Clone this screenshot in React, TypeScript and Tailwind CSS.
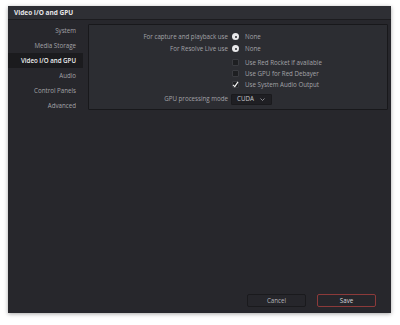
const sections = ['System', 'Media Storage', 'Video I/O and GPU', 'Audio', 'Control Panels', 'Advanced']

const Radio = () => (
  <span className="flex h-[7px] w-[7px] items-center justify-center rounded-full bg-[#e8e8ea]">
    <span className="h-[2px] w-[2px] rounded-full bg-[#2a2a2e]" />
  </span>
)

const Check = ({ checked }: { checked?: boolean }) => (
  <span className="flex h-[7px] w-[7px] items-center justify-center rounded-[1px] border border-[#3a3b40] bg-[#1e1f22]">
    {checked && (
      <svg width="7" height="7" viewBox="0 0 7 7" className="overflow-visible">
        <path d="M1 3.8 L2.8 5.6 L6 0.8" stroke="#f2f2f2" strokeWidth="1.2" fill="none" />
      </svg>
    )}
  </span>
)

const Row = ({ label, children, className }: { label?: string; children: React.ReactNode; className?: string }) => (
  <div className={'flex items-center ' + (className ?? '')}>
    <div className="w-[139px] text-right">{label}</div>
    <div className="ml-[4px] flex items-center">{children}</div>
  </div>
)

export default function App() {
  return (
    <div
      className="h-[325px] w-[400px] bg-white pl-[8px] pt-[6px] text-[6.2px] text-[#a3a3a8]"
      style={{ fontFamily: '"Open Sans", "Liberation Sans", sans-serif' }}>
      <div className="flex h-[307px] w-[383px] flex-col bg-[#27272c] shadow-[0_1px_4px_rgba(0,0,0,0.35)]">
        <div className="flex h-[14px] items-center border-b border-[#1c1c1f] bg-[#2e2f34] pl-[6px] text-[6.5px] font-bold text-[#e6e6e8]">
          Video I/O and GPU
        </div>
        <div className="flex flex-1 pt-[3px]">
          <div className="w-[75px]">
            {sections.map((s) => (
              <div
                key={s}
                className={
                  s === 'Video I/O and GPU'
                    ? 'flex h-[15px] items-center justify-end bg-[#1b1b1e] pr-[7px] font-semibold text-[#f0f0f2]'
                    : 'flex h-[15px] items-center justify-end pr-[7px]'
                }>
                {s}
              </div>
            ))}
          </div>
          <div className="ml-[5px] mr-[3px] flex flex-1 flex-col">
            <div className="mt-[1px] h-[86px] rounded-[1px] border border-[#18181b] bg-[#2c2d32] pt-[6px]">
              <Row label="For capture and playback use" className="h-[12px]">
                <Radio />
                <span className="ml-[6px]">None</span>
              </Row>
              <Row label="For Resolve Live use" className="h-[12px]">
                <Radio />
                <span className="ml-[6px]">None</span>
              </Row>
              <Row className="mt-[2px] h-[11px]">
                <Check />
                <span className="ml-[6px]">Use Red Rocket if available</span>
              </Row>
              <Row className="h-[11px]">
                <Check />
                <span className="ml-[6px]">Use GPU for Red Debayer</span>
              </Row>
              <Row className="h-[12px]">
                <Check checked />
                <span className="ml-[6px]">Use System Audio Output</span>
              </Row>
              <Row label="GPU processing mode" className="mt-[2px] h-[12px]">
                <div className="-ml-[1px] flex h-[11px] w-[41px] items-center justify-between rounded-[1px] border border-[#1a1a1d] bg-[#1f1f23] pl-[5px] pr-[6px] text-[#c8c8cc]">
                  <span>CUDA</span>
                  <svg width="5" height="3" viewBox="0 0 5 3">
                    <path d="M0.5 0.5 L2.5 2.5 L4.5 0.5" stroke="#a3a3a8" strokeWidth="0.8" fill="none" />
                  </svg>
                </div>
              </Row>
            </div>
            <div className="flex-1" />
            <div className="mb-[6px] mr-[12px] flex justify-end gap-[11px]">
              <button className="flex h-[13px] w-[59px] items-center justify-center rounded-[2px] border border-[#1a1a1d] bg-[#26262b] text-[#b5b5ba]">
                Cancel
              </button>
              <button className="flex h-[13px] w-[59px] items-center justify-center rounded-[2px] border border-[#8c3a3a] bg-[#26262b] text-[#d8d8dc]">
                Save
              </button>
            </div>
          </div>
        </div>
      </div>
    </div>
  )
}
